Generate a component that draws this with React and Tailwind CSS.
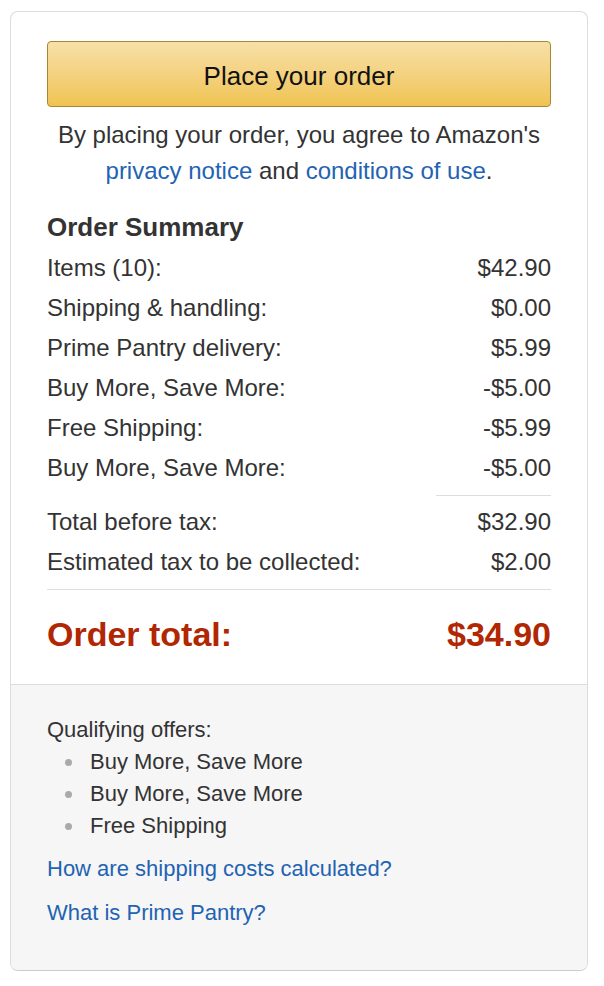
export default function App() {
    const rows = [
        ["Items (10):", "$42.90"],
        ["Shipping & handling:", "$0.00"],
        ["Prime Pantry delivery:", "$5.99"],
        ["Buy More, Save More:", "-$5.00"],
        ["Free Shipping:", "-$5.99"],
        ["Buy More, Save More:", "-$5.00"],
    ];

    const offers = ["Buy More, Save More", "Buy More, Save More", "Free Shipping"];

    return (
        <div
            className="bg-white pt-[11px] pl-[10px] pr-[16px] pb-4 text-[#333]"
            style={{ fontFamily: '"Liberation Sans", Arial, Helvetica, sans-serif' }}
        >
            <div className="w-[578px] rounded-lg border border-[#dddddd] border-b-[#cccccc] overflow-hidden">
                {/* Top section */}
                <div className="px-9 pt-[29px] pb-[30px]">
                    <button className="w-full h-[66px] pt-[4px] rounded-[4px] border border-[#a88734] bg-gradient-to-b from-[#f7e0a7] to-[#f0c350] text-[26px] text-[#111]">
                        Place your order
                    </button>

                    <p className="mt-[10px] text-center text-[24px] leading-[36px]">
                        By placing your order, you agree to Amazon's
                        <br />
                        <a href="#" className="text-[#1f63b3]">privacy notice</a> and{" "}
                        <a href="#" className="text-[#1f63b3]">conditions of use</a>.
                    </p>

                    <h3 className="mt-[18px] text-[26px] font-bold leading-10">Order Summary</h3>

                    {rows.map(([label, value], i) => (
                        <div key={i} className="flex justify-between text-[24px] leading-10 pt-px -mb-px">
                            <span>{label}</span>
                            <span>{value}</span>
                        </div>
                    ))}

                    <div className="flex justify-end mt-[8px] mb-[5px]">
                        <div className="w-[115px] border-t border-[#dddddd]" />
                    </div>

                    <div className="flex justify-between text-[24px] leading-10 pt-px -mb-px">
                        <span>Total before tax:</span>
                        <span>$32.90</span>
                    </div>
                    <div className="flex justify-between text-[24px] leading-10 pt-px -mb-px">
                        <span>Estimated tax to be collected:</span>
                        <span>$2.00</span>
                    </div>

                    <div className="mt-[8px] border-t border-[#dddddd]" />

                    <div className="mt-[24px] flex justify-between text-[34px] font-bold leading-10 text-[#b12704]">
                        <span>Order total:</span>
                        <span>$34.90</span>
                    </div>
                </div>

                {/* Bottom section */}
                <div className="border-t border-[#dddddd] bg-[#f6f6f6] px-9 pt-[29px] pb-[41px] text-[22px] leading-8">
                    <p>Qualifying offers:</p>
                    <ul>
                        {offers.map((o, i) => (
                            <li key={i} className="flex items-center">
                                <span className="ml-[18px] mr-[18px] h-[7px] w-[7px] rounded-full bg-[#aaaaaa]" />
                                <span>{o}</span>
                            </li>
                        ))}
                    </ul>
                    <a href="#" className="mt-[11px] block text-[#1f63b3]">
                        How are shipping costs calculated?
                    </a>
                    <a href="#" className="mt-[12px] block text-[#1f63b3]">
                        What is Prime Pantry?
                    </a>
                </div>
            </div>
        </div>
    );
}
